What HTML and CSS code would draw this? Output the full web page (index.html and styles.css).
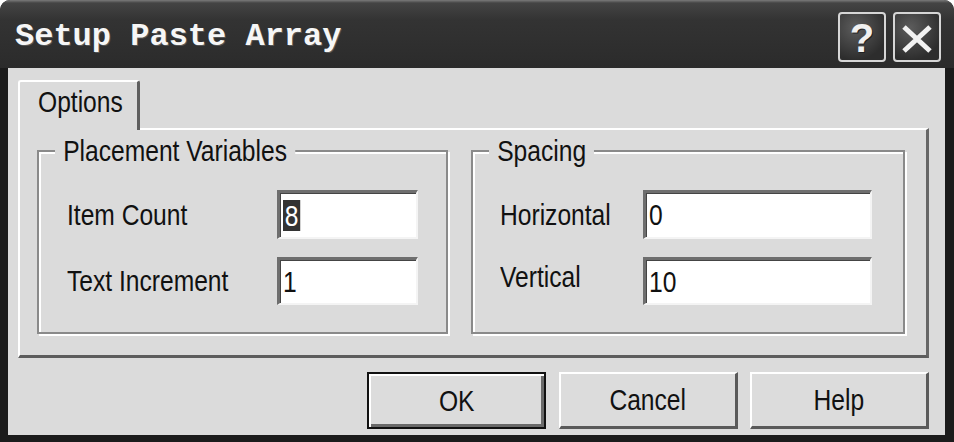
FILE: index.html
```html
<!DOCTYPE html>
<html lang="en">
<head>
<meta charset="utf-8">
<title>Setup Paste Array</title>
<link rel="stylesheet" href="styles.css">
</head>
<body>
<div class="window">
  <div class="titlebar">
    <span class="title">Setup Paste Array</span>
    <div class="caption-buttons">
      <div class="cap-btn help"><span>?</span></div>
      <div class="cap-btn close">
        <svg width="32" height="28" viewBox="0 0 32 28"><path d="M3 2 L29 26 M29 2 L3 26" stroke="#f2f2f2" stroke-width="5" fill="none"/></svg>
      </div>
    </div>
  </div>
  <div class="client">
    <div class="tabs"><div class="tab"><span class="nx">Options</span></div></div>
    <div class="panel">
      <div class="group g-place">
        <span class="caption nx">Placement Variables</span>
        <span class="lbl nx">Item Count</span><div class="field"><span class="nx sel">8</span></div>
        <span class="lbl nx">Text Increment</span><div class="field"><span class="nx">1</span></div>
      </div>
      <div class="group g-space">
        <span class="caption nx">Spacing</span>
        <span class="lbl nx">Horizontal</span><div class="field"><span class="nx">0</span></div>
        <span class="lbl nx lbl-up">Vertical</span><div class="field"><span class="nx">10</span></div>
      </div>
    </div>
    <div class="buttons">
      <div class="btn default"><span class="nx mid">OK</span></div>
      <div class="btn"><span class="nx mid">Cancel</span></div>
      <div class="btn"><span class="nx mid">Help</span></div>
    </div>
  </div>
</div>
</body>
</html>
```
FILE: styles.css
```css
* { box-sizing: border-box; }
html, body { margin: 0; padding: 0; background: #fff; }
body {
  width: 954px; height: 442px; overflow: hidden;
  font-family: "Liberation Sans", Arial, sans-serif;
  color: #111;
}
.nx {
  display: inline-block;
  transform: scaleX(0.82);
  transform-origin: left center;
  white-space: nowrap;
}
.nx.mid { transform-origin: center center; }
.window {
  width: 954px; height: 442px;
  background: #1b1b1b;
  border-radius: 10px 10px 0 0;
  overflow: hidden;
  display: flex; flex-direction: column;
}
.titlebar {
  height: 68px; flex: none;
  display: flex; justify-content: space-between; align-items: flex-start;
  padding: 0 13px 0 15px;
  background: linear-gradient(#7a7a7a 0, #444 3px, #333 20px, #2b2b2b 68px);
}
.title {
  font-family: "Liberation Mono", "Courier New", monospace;
  font-weight: bold; font-size: 32px; line-height: 36px;
  padding-top: 19px;
  color: #f6f6f6;
  text-shadow: 1px 1px 0 #555;
}
.caption-buttons { display: flex; gap: 7px; margin-top: 12px; }
.cap-btn {
  width: 48px; height: 50px;
  border: 2px solid #d6d6d6; border-radius: 4px;
  background: radial-gradient(circle at 35% 30%, #5c5c5c, #2d2d2d 75%);
  display: flex; align-items: center; justify-content: center;
  color: #f0f0f0;
}
.help span {
  font-family: "Liberation Sans", Arial, sans-serif;
  font-weight: bold; font-size: 40px; line-height: 40px;
  margin-top: 2px;
  text-shadow: 1px 1px 0 #222;
}
.close svg { margin-top: 4px; }
.client {
  height: 367px; flex: none;
  margin: 0 9px 0 8px;
  background: #dbdbdb;
  padding: 12px 16px 6px 10px;
  display: flex; flex-direction: column;
}
.tabs { display: flex; position: relative; z-index: 1; margin-bottom: -2px; }
.tab {
  width: 122px; height: 50px;
  background: #dbdbdb;
  border-top: 2px solid #fff; border-left: 2px solid #fff;
  border-right: 3px solid #5e5e5e;
  border-radius: 3px 3px 0 0;
  padding: 3px 0 0 18px;
  font-size: 30px; line-height: 34px;
}
.panel {
  height: 230px; flex: none;
  border-top: 2px solid #fff; border-left: 2px solid #fff;
  border-right: 3px solid #666; border-bottom: 3px solid #5c5c5c;
  padding: 20px 21px 21px 17px;
  display: flex; gap: 23px;
}
.group {
  position: relative;
  height: 184px;
  border: 2px solid #8a8a8a;
  box-shadow: inset 2px 2px 0 #fff, 2px 2px 0 #fff;
  display: grid; align-content: start;
  grid-template-rows: 49px 48px;
  row-gap: 18px;
  padding: 38px 0 0 28px;
}
.g-place { width: 411px; grid-template-columns: 210px 141px; }
.g-space { width: 434px; padding-left: 27px; grid-template-columns: 143px 229px; }
.caption {
  position: absolute; top: -18px; left: 16px;
  padding: 0 10px;
  background: #dbdbdb;
  font-size: 30px; line-height: 34px;
}
.lbl { font-size: 30px; line-height: 34px; align-self: center; justify-self: start; }
.lbl-up { margin-top: -8px; }
.field {
  background: #fff;
  border-style: solid; border-width: 3px 2px 2px 3px;
  border-color: #6e6e6e #f4f4f4 #f4f4f4 #6e6e6e;
  box-shadow: inset 1px 1px 0 #444;
  font-size: 30px; line-height: 34px;
  padding-left: 3px;
  display: flex; align-items: center;
}
.sel { background: #333; color: #fff; line-height: 31px; padding: 0 2px; }
.buttons {
  display: flex; justify-content: flex-end; gap: 12px;
  margin-top: 14px;
}
.btn {
  width: 179px; height: 57px;
  display: flex; align-items: center; justify-content: center;
  font-size: 30px; line-height: 34px;
  background: #dcdcdc;
  border-style: solid; border-width: 2px 3px 3px 2px;
  border-color: #fff #5a5a5a #5a5a5a #fff;
}
.btn.default {
  border: 2px solid #111;
  box-shadow: inset 2px 2px 0 #fff, inset -3px -3px 0 #6a6a6a;
  margin-right: 1px;
}
```
